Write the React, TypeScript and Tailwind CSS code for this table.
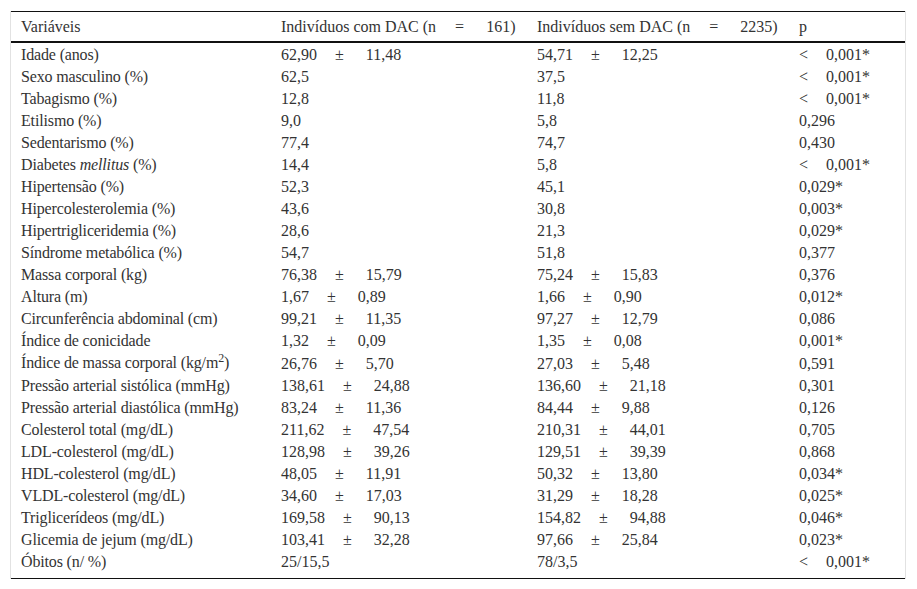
import React from "react"

type Row = { label: React.ReactNode; a: React.ReactNode; b: React.ReactNode; p: React.ReactNode }

const pm = (x: string, y: string) => (
  <>
    {x}
    <span className="ml-[18px] mr-[22px]">±</span>
    {y}
  </>
)

const lt = (v: string) => (
  <>
    <span className="mr-[18px]">&lt;</span>
    {v}
  </>
)

const rows: Row[] = [
  { label: "Idade (anos)", a: pm("62,90", "11,48"), b: pm("54,71", "12,25"), p: lt("0,001*") },
  { label: "Sexo masculino (%)", a: "62,5", b: "37,5", p: lt("0,001*") },
  { label: "Tabagismo (%)", a: "12,8", b: "11,8", p: lt("0,001*") },
  { label: "Etilismo (%)", a: "9,0", b: "5,8", p: "0,296" },
  { label: "Sedentarismo (%)", a: "77,4", b: "74,7", p: "0,430" },
  {
    label: (
      <>
        Diabetes <i>mellitus</i> (%)
      </>
    ),
    a: "14,4",
    b: "5,8",
    p: lt("0,001*"),
  },
  { label: "Hipertensão (%)", a: "52,3", b: "45,1", p: "0,029*" },
  { label: "Hipercolesterolemia (%)", a: "43,6", b: "30,8", p: "0,003*" },
  { label: "Hipertrigliceridemia (%)", a: "28,6", b: "21,3", p: "0,029*" },
  { label: "Síndrome metabólica (%)", a: "54,7", b: "51,8", p: "0,377" },
  { label: "Massa corporal (kg)", a: pm("76,38", "15,79"), b: pm("75,24", "15,83"), p: "0,376" },
  { label: "Altura (m)", a: pm("1,67", "0,89"), b: pm("1,66", "0,90"), p: "0,012*" },
  { label: "Circunferência abdominal (cm)", a: pm("99,21", "11,35"), b: pm("97,27", "12,79"), p: "0,086" },
  { label: "Índice de conicidade", a: pm("1,32", "0,09"), b: pm("1,35", "0,08"), p: "0,001*" },
  {
    label: (
      <>
        Índice de massa corporal (kg/m<span className="relative -top-[6px] text-[12px]">2</span>)
      </>
    ),
    a: pm("26,76", "5,70"),
    b: pm("27,03", "5,48"),
    p: "0,591",
  },
  { label: "Pressão arterial sistólica (mmHg)", a: pm("138,61", "24,88"), b: pm("136,60", "21,18"), p: "0,301" },
  { label: "Pressão arterial diastólica (mmHg)", a: pm("83,24", "11,36"), b: pm("84,44", "9,88"), p: "0,126" },
  { label: "Colesterol total (mg/dL)", a: pm("211,62", "47,54"), b: pm("210,31", "44,01"), p: "0,705" },
  { label: "LDL-colesterol (mg/dL)", a: pm("128,98", "39,26"), b: pm("129,51", "39,39"), p: "0,868" },
  { label: "HDL-colesterol (mg/dL)", a: pm("48,05", "11,91"), b: pm("50,32", "13,80"), p: "0,034*" },
  { label: "VLDL-colesterol (mg/dL)", a: pm("34,60", "17,03"), b: pm("31,29", "18,28"), p: "0,025*" },
  { label: "Triglicerídeos (mg/dL)", a: pm("169,58", "90,13"), b: pm("154,82", "94,88"), p: "0,046*" },
  { label: "Glicemia de jejum (mg/dL)", a: pm("103,41", "32,28"), b: pm("97,66", "25,84"), p: "0,023*" },
  { label: "Óbitos (n/ %)", a: "25/15,5", b: "78/3,5", p: lt("0,001*") },
]

export default function App() {
  return (
    <div className="min-h-[589px] bg-white pt-[11px] pl-[10px]">
      <div className="w-[896px] border-x border-[#e2e2e2]">
        <table className="w-full table-fixed border-collapse font-['Liberation_Serif','Times_New_Roman',serif] text-[16px] text-[#333] whitespace-nowrap">
          <colgroup>
            <col className="w-[260px]" />
            <col className="w-[256px]" />
            <col className="w-[262px]" />
            <col />
          </colgroup>
          <thead>
            <tr className="border-t border-b-2 border-[#111]">
              <th className="pl-[10px] pt-[4px] pb-[3px] text-left font-normal leading-[22px]">Variáveis</th>
              <th className="pl-[10px] pt-[4px] pb-[3px] text-left font-normal leading-[22px]">
                Indivíduos com DAC (n<span className="ml-[19px] mr-[22px]">=</span>161)
              </th>
              <th className="pl-[10px] pt-[4px] pb-[3px] text-left font-normal leading-[22px]">
                Indivíduos sem DAC (n<span className="ml-[19px] mr-[22px]">=</span>2235)
              </th>
              <th className="pl-[10px] pt-[4px] pb-[3px] text-left font-normal leading-[22px]">p</th>
            </tr>
          </thead>
          <tbody className="border-b border-[#111]">
            {rows.map((r, i) => {
              const last = i === rows.length - 1
              const cell = last ? "pl-[10px] pb-[5px] leading-[22px]" : "pl-[10px] leading-[22px]"
              return (
                <tr key={i} className={i === 0 ? "[&>td]:pt-[1px]" : ""}>
                  <td className={`${cell} tracking-[-0.15px]`}>{r.label}</td>
                  <td className={cell}>{r.a}</td>
                  <td className={cell}>{r.b}</td>
                  <td className={cell}>{r.p}</td>
                </tr>
              )
            })}
          </tbody>
        </table>
      </div>
    </div>
  )
}
